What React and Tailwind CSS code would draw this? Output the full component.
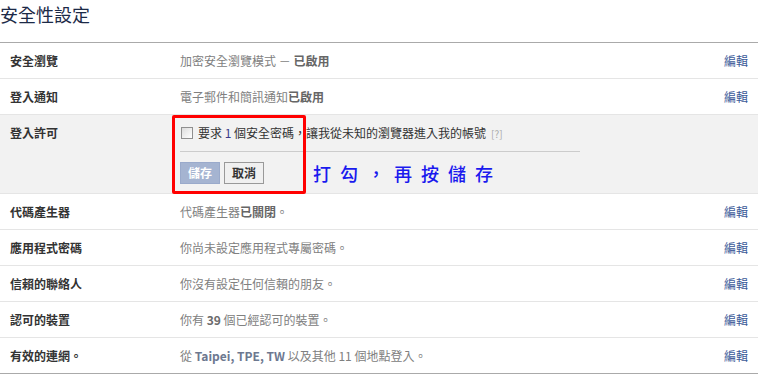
import React from "react";

const font = { fontFamily: '"Noto Sans CJK TC", "Noto Sans", sans-serif' };

function Row({ label, children, last }) {
  return (
    <div
      className={`flex items-center h-[36px] border-b ${last ? "border-[#aaaaaa]" : "border-[#e5e5e5]"}`}
    >
      <div className="w-[180px] pl-[10px] text-[12px] font-bold text-[#333333]">{label}</div>
      <div className="flex-1 text-[12px] text-[#808080]">{children}</div>
      <a className="pr-[10px] text-[12px] text-[#3b5998]">編輯</a>
    </div>
  );
}

export default function App() {
  return (
    <div className="w-[767px] h-[378px] bg-white overflow-hidden" style={font}>
      <div className="w-[758px]">
        <div className="h-[43px] border-b border-[#aaaaaa] pt-[2px]">
          <div className="text-[18px] leading-[24px] text-[#1c2a47]">安全性設定</div>
        </div>
        <Row label="安全瀏覽">
          加密安全瀏覽模式 － <span className="font-bold text-[#666666]">已啟用</span>
        </Row>
        <Row label="登入通知">
          電子郵件和簡訊通知<span className="font-bold text-[#666666]">已啟用</span>
        </Row>
        <div className="relative flex h-[79px] bg-[#f2f2f2] border-b border-[#e5e5e5]">
          <div className="w-[180px] pl-[10px] pt-[10px] text-[12px] font-bold text-[#333333] leading-[16px]">
            登入許可
          </div>
          <div className="flex-1 pt-[10px]">
            <div className="flex items-center h-[14px] text-[12px] text-[#333333] mt-[1px]">
              <span className="w-[12px] h-[12px] border border-[#8f8f8f] bg-gradient-to-br from-[#dcdcdc] to-[#ffffff] mr-[5px] ml-[1px]" />
              <span>要求 <span className="text-[#3b3b8b]">1</span> 個安全密碼，讓我從未知的瀏覽器進入我的帳號</span>
              <span className="ml-[5px] text-[10px] text-[#aaaaaa]">[?]</span>
            </div>
            <div className="w-[400px] h-px bg-[#cccccc] mt-[11px]" />
            <div className="flex items-center mt-[10px]">
              <button className="h-[22px] w-[40px] bg-[#a5b4d1] border border-[#9aaacb] text-white text-[12px] font-bold">
                儲存
              </button>
              <button className="ml-[4px] h-[22px] w-[40px] bg-[#f0f0f0] border border-[#999999] text-[#333333] text-[12px] font-bold">
                取消
              </button>
              <span className="ml-[49px] text-[18px] font-medium tracking-[9px] text-[#1a1aee] leading-[22px]">
                打勾，再按儲存
              </span>
            </div>
          </div>
          <div className="absolute left-[172px] top-0 w-[134px] h-[79px] border-[3px] border-[#ff0000] rounded-[2px]" />
        </div>
        <Row label="代碼產生器">
          代碼產生器<span className="font-bold text-[#666666]">已關閉</span>。
        </Row>
        <Row label="應用程式密碼">你尚未設定應用程式專屬密碼。</Row>
        <Row label="信賴的聯絡人">你沒有設定任何信賴的朋友。</Row>
        <Row label="認可的裝置">
          你有 <span className="font-bold text-[#6b6b6b]">39</span> 個已經認可的裝置。
        </Row>
        <Row label="有效的連網。" last>
          從 <span className="font-bold text-[#6d7890]">Taipei, TPE, TW</span> 以及其他 11 個地點登入。
        </Row>
      </div>
    </div>
  );
}
